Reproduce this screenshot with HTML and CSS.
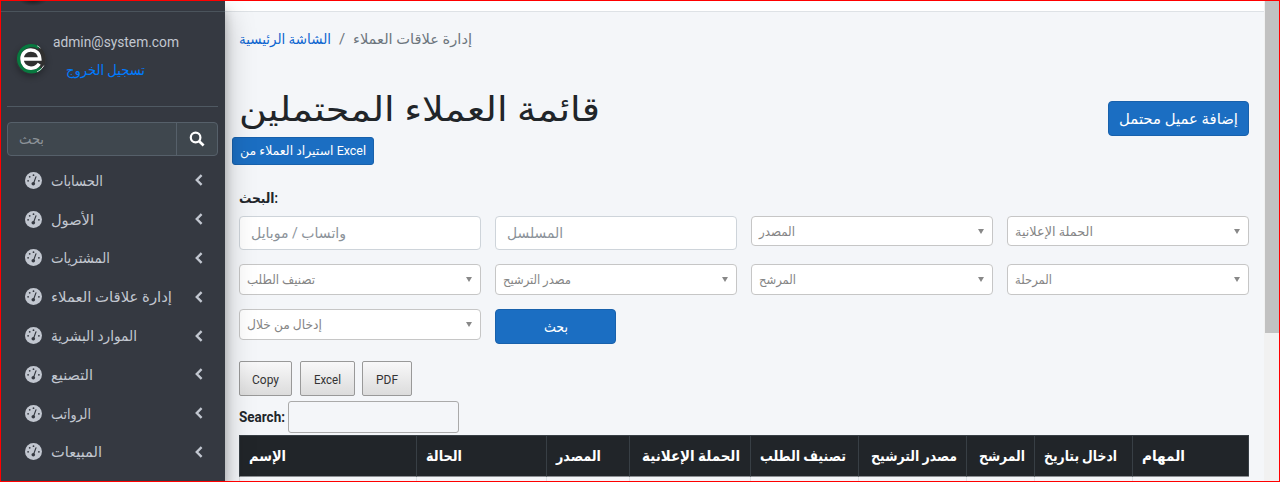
FILE: index.html
```html
<!DOCTYPE html>
<html lang="ar">
<head>
<meta charset="utf-8">
<title>قائمة العملاء المحتملين</title>
<link rel="stylesheet" href="styles.css">
</head>
<body>
<svg class="defs" aria-hidden="true">
  <symbol id="gauge" viewBox="0 0 17 17">
    <circle cx="8.5" cy="8.5" r="8.5" fill="#c2c7d0"/>
    <g fill="#353941"><circle cx="8.5" cy="3.2" r=".9"/><circle cx="4.7" cy="4.8" r=".9"/><circle cx="3.1" cy="8.8" r=".9"/><circle cx="13.9" cy="8.8" r=".9"/><circle cx="8.3" cy="11.8" r="1.8"/></g>
    <path d="M8.5 11.5 11 4.8" stroke="#353941" stroke-width="1.1" stroke-linecap="round"/>
  </symbol>
  <symbol id="angle" viewBox="0 0 8 12"><path d="M6.6 1.2 1.8 6l4.8 4.8" fill="none" stroke="#c2c7d0" stroke-width="2.4"/></symbol>
</svg>
<div class="app">
  <aside class="sidebar">
    <div class="brand"></div>
    <div class="user">
      <svg class="avatar" viewBox="0 0 30 30"><circle cx="15" cy="15" r="14.7" fill="#303030"/><path d="M23 3.500A13.200 13.200 0 1 0 25 24" fill="none" stroke="#08783f" stroke-width="3.400"/><path d="M21 1.600A14.400 14.400 0 0 1 24.500 4M28 21.500A14.400 14.400 0 0 1 21 28" fill="none" stroke="#ddd" stroke-width="1"/><path d="M5.500 15H23.800C23.500 9.200 19.800 6 14.800 6 9.600 6 6 9.800 6 15s3.600 9.200 9 9.200c3.800 0 6.500-1.700 8.300-4.400" fill="none" stroke="#fff" stroke-width="3.500"/></svg>
      <div class="who"><span class="t" data-w="126">admin@system.com</span><a class="t" data-w="79">تسجيل الخروج</a></div>
    </div>
    <div class="find"><div class="find-text"><span class="t" data-w="25">بحث</span></div><div class="find-btn"><svg viewBox="0 0 16 16"><circle cx="6.600" cy="6.500" r="4.800" fill="none" stroke="#fff" stroke-width="2.200"/><path d="m10.200 10.200 4.400 4.300" stroke="#fff" stroke-width="2.700"/></svg></div></div>
    <nav class="menu">
      <a><svg class="g"><use href="#gauge"/></svg><span class="t" data-w="52">الحسابات</span><svg class="a"><use href="#angle"/></svg></a>
      <a><svg class="g"><use href="#gauge"/></svg><span class="t" data-w="43">الأصول</span><svg class="a"><use href="#angle"/></svg></a>
      <a><svg class="g"><use href="#gauge"/></svg><span class="t" data-w="59">المشتريات</span><svg class="a"><use href="#angle"/></svg></a>
      <a><svg class="g"><use href="#gauge"/></svg><span class="t" data-w="121">إدارة علاقات العملاء</span><svg class="a"><use href="#angle"/></svg></a>
      <a><svg class="g"><use href="#gauge"/></svg><span class="t" data-w="86">الموارد البشرية</span><svg class="a"><use href="#angle"/></svg></a>
      <a><svg class="g"><use href="#gauge"/></svg><span class="t" data-w="42">التصنيع</span><svg class="a"><use href="#angle"/></svg></a>
      <a><svg class="g"><use href="#gauge"/></svg><span class="t" data-w="40">الرواتب</span><svg class="a"><use href="#angle"/></svg></a>
      <a><svg class="g"><use href="#gauge"/></svg><span class="t" data-w="51">المبيعات</span><svg class="a"><use href="#angle"/></svg></a>
    </nav>
  </aside>
  <main class="content">
    <div class="topbar"></div>
    <div class="page">
      <div class="crumbs"><a class="t" data-w="92">الشاشة الرئيسية</a><span class="slash">/</span><span class="t" data-w="119">إدارة علاقات العملاء</span></div>
      <div class="heading"><h1><span class="t" data-w="361">قائمة العملاء المحتملين</span></h1><a class="btn add"><span class="t" data-w="119">إضافة عميل محتمل</span></a></div>
      <a class="btn import"><span class="t" data-w="126">استيراد العملاء من Excel</span></a>
      <div class="caption"><span class="t" data-w="39">البحث:</span></div>
      <div class="filters">
        <div class="input"><span class="t" data-w="95">واتساب / موبايل</span></div>
        <div class="input"><span class="t" data-w="56">المسلسل</span></div>
        <div class="select first"><span class="t" data-w="36">المصدر</span></div>
        <div class="select first"><span class="t" data-w="78">الحملة الإعلانية</span></div>
        <div class="select"><span class="t" data-w="68">تصنيف الطلب</span></div>
        <div class="select"><span class="t" data-w="68">مصدر الترشيح</span></div>
        <div class="select"><span class="t" data-w="37">المرشح</span></div>
        <div class="select"><span class="t" data-w="37">المرحلة</span></div>
        <div class="select"><span class="t" data-w="75">إدخال من خلال</span></div>
        <a class="btn go"><span class="t" data-w="24">بحث</span></a>
      </div>
      <div class="export"><button class="copy"><span class="t" data-w="27">Copy</span></button><button class="excel"><span class="t" data-w="27">Excel</span></button><button class="pdf"><span class="t" data-w="22">PDF</span></button></div>
      <div class="search"><span class="t" data-w="46">Search:</span><div class="search-box"></div></div>
      <div class="grid head"><div><span class="t" data-w="37">الإسم</span></div><div><span class="t" data-w="36">الحالة</span></div><div><span class="t" data-w="45">المصدر</span></div><div class="wide"><span class="t" data-w="98">الحملة الإعلانية</span></div><div><span class="t" data-w="86">تصنيف الطلب</span></div><div class="wide"><span class="t" data-w="86">مصدر الترشيح</span></div><div class="wide"><span class="t" data-w="46">المرشح</span></div><div><span class="t" data-w="73">ادخال بتاريخ</span></div><div><span class="t" data-w="43">المهام</span></div></div>
      <div class="grid row"><div></div><div></div><div></div><div></div><div></div><div></div><div></div><div></div><div></div></div>
    </div>
  </main>
  <div class="scroll"><div class="thumb"></div></div>
</div>
<script src="labels.js"></script>
</body>
</html>
```
FILE: styles.css
```css
* { box-sizing: border-box; }
body { margin: 0; height: 482px; overflow: hidden; background: #f4f6f9; color: #212529; font: 16px/24px Roboto, "DejaVu Sans", sans-serif; }
body::after { content: ""; position: fixed; inset: 0; border: 1px solid #f00; pointer-events: none; z-index: 9; }
.defs { display: none; }
.app { display: flex; height: 482px; }
.t { display: inline-block; white-space: nowrap; transform-origin: 0 50%; flex: none; }
svg { flex: none; display: block; }

.sidebar { width: 225px; flex: none; background: #353941; color: #c2c7d0; box-shadow: 0 14px 28px rgba(0,0,0,.25), 0 10px 10px rgba(0,0,0,.22); z-index: 2; }
.brand { height: 12px; border-bottom: 1px solid #4b545c; background: radial-gradient(ellipse 14px 6px at 33px 0, #1b1d20, #353941); }
.user { display: flex; margin: 0 7px; height: 95px; border-bottom: 1px solid #4f5962; padding-left: 9px; }
.avatar { width: 30px; height: 30px; margin-top: 32px; border-radius: 50%; box-shadow: 0 3px 6px rgba(0,0,0,.3); }
.who { display: flex; flex-direction: column; align-items: flex-start; padding: 18px 0 0 7px; gap: 4px; font-size: 15px; }
.who a { color: #007bff; margin-left: 13px; font-size: 14px; }
.find { display: flex; height: 34px; margin: 15px 7px 0; border: 1px solid #56606a; border-radius: 4px; background: #3f474e; }
.find-text { flex: 1; padding: 4px 11px; color: #8d9399; font-size: 14px; }
.find-btn { width: 41px; border-left: 1px solid #56606a; display: grid; place-items: center; }
.find-btn svg { width: 16px; height: 16px; }
.menu { display: flex; flex-direction: column; padding-top: 5px; }
.menu a { display: flex; align-items: center; height: 38.8px; padding-left: 25px; font-size: 14.5px; }
.menu .t { padding-top: 3px; }
.g { width: 17px; height: 17px; margin-right: 9px; }
.a { width: 8px; height: 12px; margin: 0 22px 0 auto; }

.content { flex: 1; min-width: 0; }
.topbar { height: 12px; background: #fff; border-bottom: 1px solid #dee2e6; }
.page { padding: 0 15px 0 14px; }
.crumbs { display: flex; height: 54px; padding-top: 15px; font-size: 14px; color: #6c757d; }
.crumbs a { color: #0d65d0; }
.slash { margin: 0 8px; width: 6px; font-size: 15px; }
.heading { display: flex; justify-content: space-between; align-items: flex-start; height: 71px; padding-top: 23px; }
h1 { margin: 0; font-size: 34px; font-weight: 400; line-height: 40px; }
.btn { display: flex; align-items: center; justify-content: center; background: #1b6ec2; border: 1px solid #1861ac; border-radius: 4px; color: #fff; }
.add { width: 141px; height: 35px; margin-top: 12px; font-size: 15px; }
.import { width: 142px; height: 28px; margin-left: -7px; font-size: 12.5px; border-radius: 3px; }
.caption { margin-top: 21px; height: 30px; font-size: 14px; font-weight: 700; }
.filters { display: grid; grid-template-columns: repeat(4, 242px); gap: 14px; grid-template-rows: 34px 31px 35px; align-items: start; }
.input { height: 34px; padding: 4px 11px; background: #fff; border: 1px solid #ced4da; border-radius: 4px; color: #8b9299; font-size: 14px; }
.select { display: flex; align-items: center; justify-content: space-between; height: 31px; padding: 0 7px; background: #fff; border: 1px solid #c6c6c6; border-radius: 4px; color: #858585; font-size: 12.5px; }
.select.first { height: 30px; }
.select .t { padding-top: 1px; }
.select::after { content: ""; border: 3px solid transparent; border-top: 5px solid #888; border-bottom: 0; margin-right: 1px; }
.go { width: 121px; height: 35px; font-size: 15px; }
.export { display: flex; margin-top: 17px; height: 35px; }
button { height: 35px; padding: 2px 0 0; font: 12.5px/18px Roboto, "DejaVu Sans", sans-serif; color: #333; border: 1px solid #999; border-radius: 2px; background: linear-gradient(#f8f8f9, #dcdcdc); }
.copy { width: 53px; margin-right: 8px; }
.excel { width: 55px; margin-right: 7px; }
.pdf { width: 50px; }
.search { display: flex; align-items: center; height: 32px; margin: 5px 0 2px; gap: 3px; font-size: 14px; font-weight: 700; }
.search-box { width: 171px; height: 32px; border: 1px solid #aaa; border-radius: 3px; }
.grid { display: grid; grid-template-columns: 177px 130px 83px 121px 108px 108px 68px 98px 117px; }
.head { height: 42px; background: #212529; color: #fff; font-size: 14.5px; font-weight: 700; border-right: 1px solid #383f45; }
.head div { display: flex; align-items: center; padding: 2px 0 0 9px; border: solid #383f45; border-width: 1px 0 0 1px; border-bottom: 1px solid #8d9094; }
.head .wide { padding-left: 12px; }
.row { height: 5px; }
.row div { border-left: 1px solid #dee2e6; }
.scroll { width: 16px; background: #f1f1f1; padding-left: 1px; }
.thumb { width: 14px; height: 333px; background: #c1c1c1; }
```
FILE: labels.js
```javascript
// Fits every label to the width given in its data-w attribute.
document.querySelectorAll('.t').forEach(function (el) {
  var natural = el.getBoundingClientRect().width;
  var width = Number(el.dataset.w);
  el.style.transform = 'scaleX(' + width / natural + ')';
  el.style.marginRight = (width - natural) + 'px';
});
```
